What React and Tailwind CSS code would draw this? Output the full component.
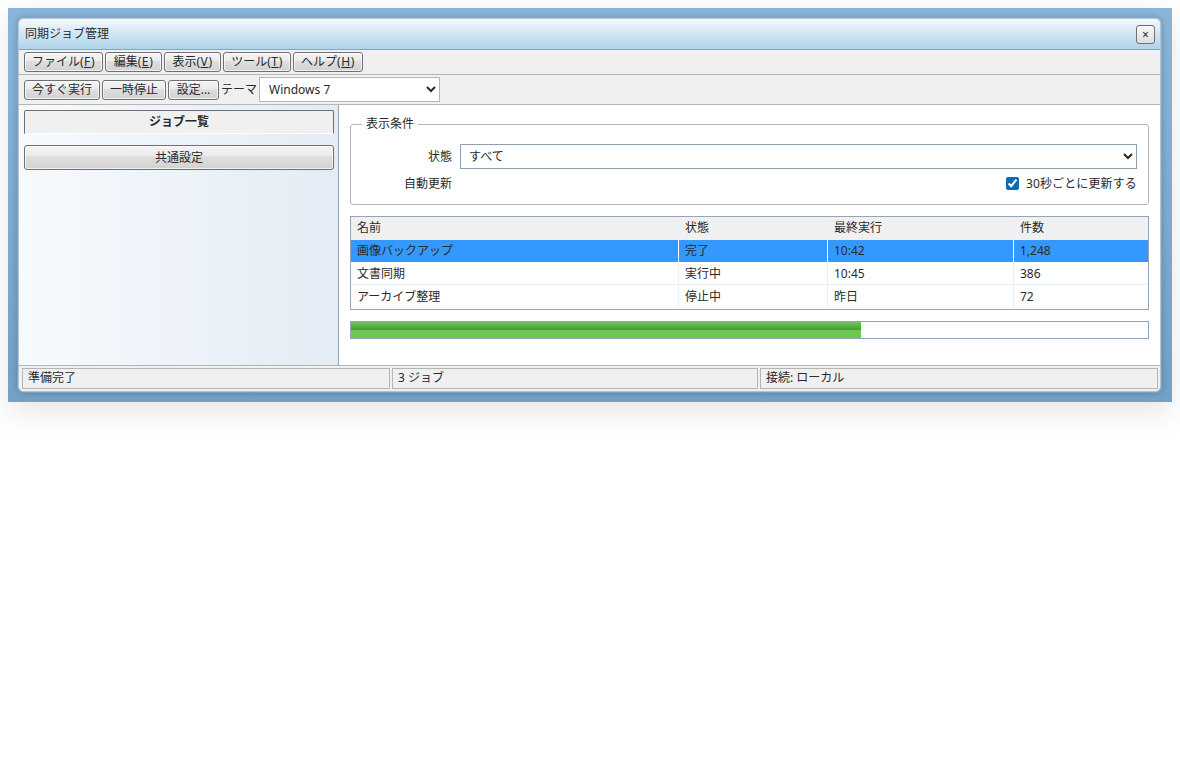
import React from "react";

const font = "font-['Noto_Sans','Noto_Sans_CJK_JP',sans-serif]";
const btn =
  "h-5 border border-[#707070] rounded-[3px] text-xs leading-none text-[#2a2a2a] shadow-[inset_0_0_0_1px_#fffa] bg-[linear-gradient(#f4f4f4,#ebebeb_45%,#dfdfdf_45%,#d2d2d2)]";
const selectCls =
  "bg-white border text-xs text-[#2a2a2a] pr-1 outline-none";

const menus = [
  ["ファイル", "F", "w-[79px]"],
  ["編集", "E", "w-[57px]"],
  ["表示", "V", "w-[57px]"],
  ["ツール", "T", "w-[68px]"],
  ["ヘルプ", "H", "w-[70px]"],
];

const rows = [
  ["画像バックアップ", "完了", "10:42", "1,248"],
  ["文書同期", "実行中", "10:45", "386"],
  ["アーカイブ整理", "停止中", "昨日", "72"],
];

const App = () => {
  return (
    <div className={`p-2 bg-white min-h-[760px] ${font} text-xs text-[#2a2a2a]`}>
      <div className="h-[394px] pt-[10px] pb-[10px] pl-[10px] pr-[11px] bg-[linear-gradient(#8ab5d9,#73a0c6)] shadow-[0_10px_30px_rgba(0,0,0,0.1)]">
        <div className="h-full flex flex-col border border-[#b4c2cf] rounded-[6px] overflow-hidden bg-white shadow-[0_0_6px_rgba(20,50,80,0.4),0_0_0_1px_rgba(255,255,255,0.25)]">
          {/* title bar */}
          <div className="h-[31px] shrink-0 flex items-center justify-between pl-[6px] pr-[5px] border-b border-[#86a3bd] bg-[linear-gradient(#f3fafe,#aed3ec)]">
            <span className="text-xs">同期ジョブ管理</span>
            <button className="w-[19px] h-[19px] mt-[1px] flex items-center justify-center border border-[#707070] rounded-[3px] text-xs leading-none bg-[linear-gradient(#f8f8f8,#dedede)]">
              ×
            </button>
          </div>

          {/* menu */}
          <div className="h-[25px] shrink-0 flex items-center gap-[2px] pl-[5px] bg-[#f0f0f0] border-b border-[#b5b5b5]">
            {menus.map(([label, key, w]) => (
              <button key={key} className={`${btn} ${w}`}>
                {label}
                <span className="tracking-[0.6px]">
                  (<span className="underline">{key}</span>)
                </span>
              </button>
            ))}
          </div>

          {/* toolbar */}
          <div className="h-[30px] shrink-0 flex items-center gap-[2px] pl-[5px] bg-[#f0f0f0] border-b border-[#b5b5b5]">
            <button className={`${btn} w-[76px]`}>今すぐ実行</button>
            <button className={`${btn} w-[64px]`}>一時停止</button>
            <button className={`${btn} w-[51px]`}>設定...</button>
            <span>テーマ</span>
            <select className={`${selectCls} pl-[5px] w-[181px] h-[25px] border-[#b5b5b5]`} defaultValue="Windows 7">
              <option>Windows 7</option>
            </select>
          </div>

          <div className="flex-1 flex min-h-0">
            {/* sidebar */}
            <div className="w-[320px] shrink-0 pt-[5px] pl-[5px] pr-[4px] border-r border-[#93a5b6] bg-[linear-gradient(90deg,#f6fafd,#e3ebf4)]">
              <div className="h-6 flex items-center justify-center font-bold border border-[#707070] border-b-white rounded-t-[2px] bg-[#f0f0f0]">
                ジョブ一覧
              </div>
              <button className={`${btn} w-full h-[25px] mt-[11px]`}>共通設定</button>
            </div>

            {/* content */}
            <div className="flex-1 min-w-0 px-[11px] pt-[11px] bg-white">
              <fieldset className="h-[89px] border border-[#b5b5b5] rounded-[3px] px-[11px]">
                <legend className="px-[4px]">表示条件</legend>
                <div className="grid grid-cols-[90px_1fr] gap-x-2 items-center mt-3">
                  <label className="text-right">状態</label>
                  <select className={`${selectCls} border-[#8e9fb0] pl-[4px] w-full h-[25px]`} defaultValue="すべて">
                    <option>すべて</option>
                  </select>
                  <label className="text-right">自動更新</label>
                  <label className="flex items-center justify-end gap-[7px] h-[29px]">
                    <input type="checkbox" defaultChecked className="w-[13px] h-[13px] m-0 accent-[#0f6cb0]" />
                    <span className="w-[111px] tracking-[0.12px] whitespace-nowrap">30秒ごとに更新する</span>
                  </label>
                </div>
              </fieldset>

              <div className="mt-[11px] h-[94px] border border-[#93a5b6] overflow-hidden">
                <table className="w-full table-fixed border-separate border-spacing-0 text-xs">
                  <colgroup>
                    <col className="w-[328px]" />
                    <col className="w-[149px]" />
                    <col className="w-[186px]" />
                    <col />
                  </colgroup>
                  <thead>
                    <tr className="h-[23px] bg-[#f0f0f0]">
                      {["名前", "状態", "最終実行", "件数"].map((h) => (
                        <th key={h} className="px-[6px] pb-[2px] font-normal text-left border-r border-[#e5f1fb] last:border-r-0">
                          {h}
                        </th>
                      ))}
                    </tr>
                  </thead>
                  <tbody>
                    {rows.map((row, i) => (
                      <tr key={row[0]} className={i === 0 ? "h-[22px] bg-[#3399ff]" : "h-[23px]"}>
                        {row.map((c) => (
                          <td
                            key={c}
                            className={`px-[6px] border-r last:border-r-0 ${
                              i === 0 ? "border-white pb-[1px]" : i === 1 ? "border-[#e5f1fb] border-b pt-[1px]" : "border-[#e5f1fb]"
                            }`}
                          >
                            {c}
                          </td>
                        ))}
                      </tr>
                    ))}
                  </tbody>
                </table>
              </div>

              <div className="mt-[11px] h-[18px] border border-[#93a5b6] bg-white">
                <div className="w-[64%] h-full bg-[linear-gradient(#74c261,#3f9f2e_50%,#6cc850_50%,#6cc850)]" />
              </div>
            </div>
          </div>

          {/* status */}
          <div className="h-[26px] shrink-0 grid grid-cols-[368px_366px_398px] gap-[2px] pl-[3px] pt-[2px] pb-[2px] bg-[#f0f0f0] border-t border-[#b5b5b5]">
            {["準備完了", "3 ジョブ", "接続: ローカル"].map((s) => (
              <div key={s} className="flex items-center px-[5px] pb-[1px] border border-[#b5b5b5]">
                {s}
              </div>
            ))}
          </div>
        </div>
      </div>
    </div>
  );
};

export default App;
